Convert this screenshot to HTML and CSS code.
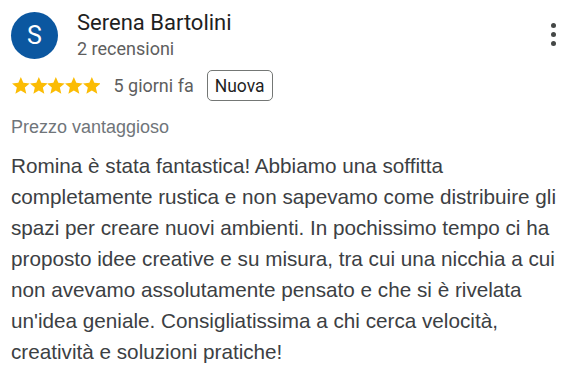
FILE: index.html
```html
<!DOCTYPE html>
<html lang="it">
<head>
<meta charset="utf-8">
<link rel="stylesheet" href="styles.css">
</head>
<body>
<div class="review">
  <div class="head">
    <div class="avatar">S</div>
    <div class="who">
      <div class="name">Serena Bartolini</div>
      <div class="count">2 recensioni</div>
    </div>
    <div class="more" aria-label="Altro">
      <span class="dot"></span><span class="dot"></span><span class="dot"></span>
    </div>
  </div>
  <div class="meta">
    <div class="stars">
      <svg viewBox="2 2 20 19.27" class="star"><path d="M12 17.27L18.18 21l-1.64-7.03L22 9.24l-7.19-.61L12 2 9.19 8.63 2 9.24l5.46 4.73L5.82 21z"/></svg>
      <svg viewBox="2 2 20 19.27" class="star"><path d="M12 17.27L18.18 21l-1.64-7.03L22 9.24l-7.19-.61L12 2 9.19 8.63 2 9.24l5.46 4.73L5.82 21z"/></svg>
      <svg viewBox="2 2 20 19.27" class="star"><path d="M12 17.27L18.18 21l-1.64-7.03L22 9.24l-7.19-.61L12 2 9.19 8.63 2 9.24l5.46 4.73L5.82 21z"/></svg>
      <svg viewBox="2 2 20 19.27" class="star"><path d="M12 17.27L18.18 21l-1.64-7.03L22 9.24l-7.19-.61L12 2 9.19 8.63 2 9.24l5.46 4.73L5.82 21z"/></svg>
      <svg viewBox="2 2 20 19.27" class="star"><path d="M12 17.27L18.18 21l-1.64-7.03L22 9.24l-7.19-.61L12 2 9.19 8.63 2 9.24l5.46 4.73L5.82 21z"/></svg>
    </div>
    <span class="when">5 giorni fa</span>
    <span class="badge">Nuova</span>
  </div>
  <div class="tag">Prezzo vantaggioso</div>
  <p class="text">Romina è stata fantastica! Abbiamo una soffitta completamente rustica e non sapevamo come distribuire gli spazi per creare nuovi ambienti. In pochissimo tempo ci ha proposto idee creative e su misura, tra cui una nicchia a cui non avevamo assolutamente pensato e che si è rivelata un'idea geniale. Consigliatissima a chi cerca velocità, creatività e soluzioni pratiche!</p>
</div>
</body>
</html>
```
FILE: styles.css
```css
html, body {
  margin: 0;
  padding: 0;
  background: #ffffff;
}
.review {
  padding: 10px 0 0 11px;
  font-family: Roboto, "Liberation Sans", sans-serif;
}
.head {
  display: flex;
  align-items: flex-start;
}
.avatar {
  width: 47px;
  height: 47px;
  margin-top: 2px;
  border-radius: 50%;
  background: #0b57a0;
  color: #ffffff;
  font-size: 25px;
  display: flex;
  align-items: center;
  justify-content: center;
  flex: none;
}
.who {
  margin-left: 19px;
  flex: 1;
}
.name {
  font-size: 22px;
  line-height: 26px;
  color: #1f1f1f;
}
.count {
  font-size: 18px;
  line-height: 22px;
  margin-top: 2px;
  color: #5e5e5e;
}
.more {
  display: flex;
  flex-direction: column;
  gap: 4px;
  margin-top: 13px;
  margin-right: 25px;
}
.dot {
  width: 5px;
  height: 5px;
  border-radius: 50%;
  background: #444746;
}
.meta {
  display: flex;
  align-items: center;
  margin-top: 10px;
  height: 31px;
}
.stars {
  display: flex;
  padding-left: 1px;
}
.star {
  width: 17.7px;
  height: 17px;
  fill: #fbbc04;
}
.when {
  margin-left: 13px;
  font-size: 18px;
  color: #5e5e5e;
}
.badge {
  margin-left: 13px;
  border: 1px solid #747775;
  border-radius: 5px;
  height: 29px;
  padding: 0 7px;
  display: flex;
  align-items: center;
  font-size: 17.5px;
  font-weight: 400;
  color: #1f1f1f;
}
.tag {
  margin-top: 15px;
  font-family: "Liberation Sans", Arial, sans-serif;
  font-size: 18px;
  line-height: 22px;
  color: #70757a;
}
.text {
  margin: 12px 0 0;
  font-family: "Liberation Sans", Arial, sans-serif;
  font-size: 20.7px;
  line-height: 31px;
  color: #3c4043;
}
```
